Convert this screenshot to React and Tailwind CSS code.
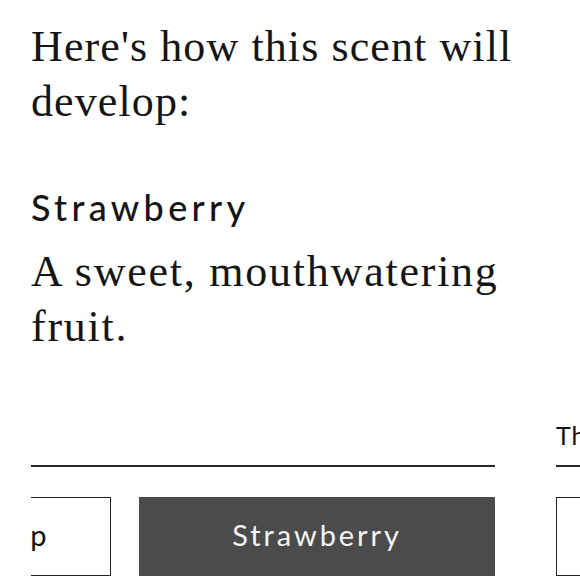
import React from "react";

const serif = { fontFamily: '"Liberation Serif", "Times New Roman", serif' };
const sans = { fontFamily: 'Lato, "Open Sans", sans-serif' };

const Stage = ({ title, children }) => (
  <div className="w-[464px] shrink-0">
    <div className="h-[30px] text-[25px] leading-[30px] text-[#111] tracking-[0.04em]" style={sans}>
      {title}
    </div>
    <div className="mt-[15px] h-[2px] bg-[#2a2a2a]" />
    <div className="mt-[30px]">{children}</div>
  </div>
);

const App = () => {
  return (
    <div className="w-[580px] h-[580px] bg-white overflow-hidden pt-[19px] pl-[31px]">
      <h1 className="text-[44px] leading-[55px] text-[#151515] tracking-[0.025em] pr-[20px]" style={serif}>
        Here's how this scent will develop:
      </h1>

      <h2 className="mt-[56px] text-[36px] leading-[44px] text-[#151515] font-medium tracking-[0.12em]" style={sans}>
        Strawberry
      </h2>
      <p className="mt-[15px] text-[44px] leading-[55px] text-[#151515] tracking-[0.04em] pr-[30px]" style={serif}>
        A sweet, mouthwatering fruit.
      </p>

      {/* timeline, scrolled so the first stage sits half out of view */}
      <div className="mt-[66px] overflow-hidden">
        <div className="flex gap-[61px]">
          <Stage title="">
            <div className="flex gap-[28px] -ml-[100px]">
              <div className="w-[180px] h-[79px] shrink-0 border-[1.5px] border-[#222] flex items-center justify-center pl-[2px] pb-[3px] text-[29px] text-[#111] tracking-[0.1em]" style={sans}>
                Top
              </div>
              <div className="w-[356px] h-[79px] shrink-0 bg-[#4b4b4b] flex items-center justify-center pb-[4px] text-[29px] text-[#f4f4f4] tracking-[0.1em]" style={sans}>
                Strawberry
              </div>
            </div>
          </Stage>
          <Stage title="Then">
            <div className="flex gap-[28px]">
              <div className="w-[180px] h-[79px] shrink-0 border-[1.5px] border-[#222]" />
            </div>
          </Stage>
        </div>
      </div>
    </div>
  );
};

export default App;
